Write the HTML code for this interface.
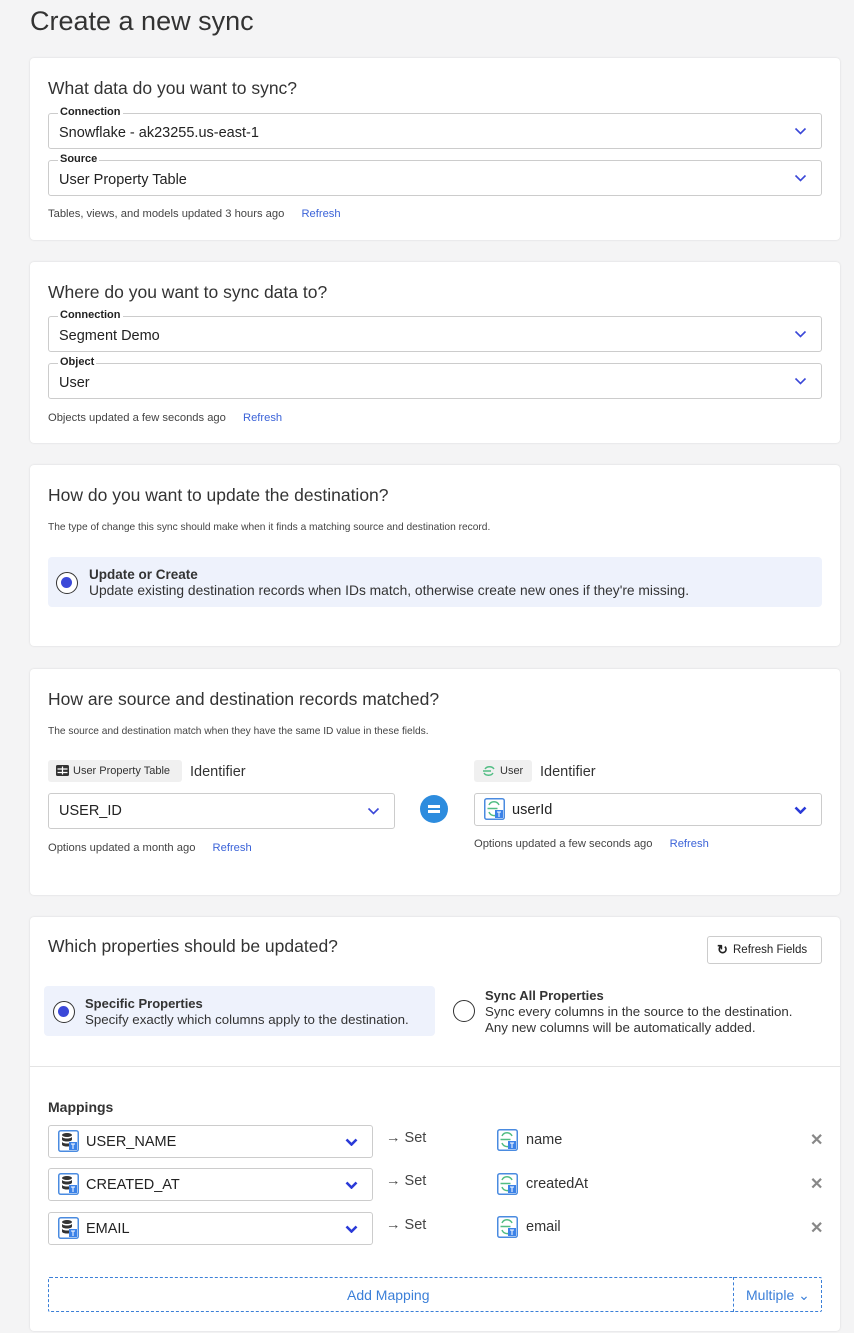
<!DOCTYPE html>
<html><head><meta charset="utf-8"><style>
*{box-sizing:border-box;margin:0;padding:0}
body{width:854px;height:1333px;background:#f4f4f5;font-family:"Liberation Sans",sans-serif;color:#222;position:relative;overflow:hidden}
.a{position:absolute}
h1{position:absolute;left:30px;top:6px;font-size:27px;font-weight:400;color:#333}
.card{position:absolute;left:30px;width:810px;background:#fff;border-radius:4px;box-shadow:0 0 2px rgba(0,0,0,.12)}
.h{position:absolute;left:18px;font-size:17.5px;color:#333}
.sel{position:absolute;border:1px solid #ccc;border-radius:3px;background:#fff;font-size:14.5px;color:#222}
.lbl{position:absolute;left:9px;top:-8px;font-size:11px;font-weight:bold;background:#fff;padding:0 2px;color:#222}
.sel .v{position:absolute;left:10px;top:50%;transform:translateY(-50%)}
.chev{position:absolute;right:14px;top:50%;transform:translateY(-50%)}
.sm{position:absolute;font-size:11.2px;color:#444}
.rf{color:#3b63d8;margin-left:14px}
.radio{position:absolute;width:22px;height:22px;border-radius:50%;border:1.5px solid #333;background:#fff}
.radio.on:after{content:"";position:absolute;left:4px;top:4px;width:11px;height:11px;border-radius:50%;background:#3b48d8}
.ico{position:absolute;width:21px;height:22px}
</style></head><body>
<h1>Create a new sync</h1>
<svg width="0" height="0" style="position:absolute"><defs>
<symbol id="cv" viewBox="0 0 12 8"><path d="M1 1.5l5 5 5-5" fill="none" stroke="#3b48d8" stroke-width="1.6"/></symbol>
<symbol id="cvb" viewBox="0 0 12 8"><path d="M1 1.5l5 5 5-5" fill="none" stroke="#2a3ad8" stroke-width="2.6"/></symbol>
<symbol id="db" viewBox="0 0 21 22"><rect x="0.75" y="0.75" width="19.5" height="20.5" rx="2" fill="#fff" stroke="#4a8be0" stroke-width="1.5"/><ellipse cx="9" cy="5" rx="5" ry="2" fill="#333"/><path d="M4 6.5v3c0 1.2 2.2 2 5 2s5-.8 5-2v-3c0 1.2-2.2 2-5 2s-5-.8-5-2zM4 11.5v3c0 1.2 2.2 2 5 2s5-.8 5-2v-3c0 1.2-2.2 2-5 2s-5-.8-5-2z" fill="#333"/><rect x="11" y="12" width="8" height="8" fill="#3b82e8"/><path d="M13 14h4M15 14v5" stroke="#fff" stroke-width="1"/></symbol>
<symbol id="sg" viewBox="0 0 21 22"><rect x="0.75" y="0.75" width="19.5" height="20.5" rx="2" fill="#fff" stroke="#4a8be0" stroke-width="1.5"/><path d="M5 7a5.5 5.5 0 0 1 10 0M5 14a5.5 5.5 0 0 0 9 2M3.5 10.5h10" fill="none" stroke="#52bd84" stroke-width="1.5"/><rect x="11" y="12" width="8" height="8" fill="#3b82e8"/><path d="M13 14h4M15 14v5" stroke="#fff" stroke-width="1"/></symbol>
</defs></svg>

<div class="card" style="top:58px;height:182px">
<div class="h" style="top:20px">What data do you want to sync?</div>
<div class="sel" style="left:18px;top:55px;width:774px;height:36px"><span class="lbl">Connection</span><span class="v" style="top:55%">Snowflake - ak23255.us-east-1</span><svg class="chev" width="13" height="8"><use href="#cv"/></svg></div>
<div class="sel" style="left:18px;top:102px;width:774px;height:36px"><span class="lbl">Source</span><span class="v" style="top:55%">User Property Table</span><svg class="chev" width="13" height="8"><use href="#cv"/></svg></div>
<div class="sm" style="left:18px;top:150px">Tables, views, and models updated 3 hours ago <span class="rf">Refresh</span></div>
</div>

<div class="card" style="top:262px;height:181px">
<div class="h" style="top:20px">Where do you want to sync data to?</div>
<div class="sel" style="left:18px;top:54px;width:774px;height:36px"><span class="lbl">Connection</span><span class="v" style="top:55%">Segment Demo</span><svg class="chev" width="13" height="8"><use href="#cv"/></svg></div>
<div class="sel" style="left:18px;top:101px;width:774px;height:36px"><span class="lbl">Object</span><span class="v" style="top:55%">User</span><svg class="chev" width="13" height="8"><use href="#cv"/></svg></div>
<div class="sm" style="left:18px;top:150px">Objects updated a few seconds ago <span class="rf">Refresh</span></div>
</div>

<div class="card" style="top:465px;height:181px">
<div class="h" style="top:20px">How do you want to update the destination?</div>
<div class="sm" style="left:18px;top:57px;font-size:10.2px">The type of change this sync should make when it finds a matching source and destination record.</div>
<div class="a" style="left:18px;top:92px;width:774px;height:50px;background:#eef2fc;border-radius:4px"></div>
<div class="radio on" style="left:26px;top:107px"></div>
<div class="a" style="left:59px;top:102px;font-size:13.5px;font-weight:bold;color:#333">Update or Create</div>
<div class="a" style="left:59px;top:118px;font-size:13.8px;color:#333">Update existing destination records when IDs match, otherwise create new ones if they're missing.</div>
</div>

<div class="card" style="top:669px;height:226px">
<div class="h" style="top:20px">How are source and destination records matched?</div>
<div class="sm" style="left:18px;top:57px;font-size:10.2px">The source and destination match when they have the same ID value in these fields.</div>
<div class="a" style="left:18px;top:91px;width:134px;height:22px;background:#f0f0f0;border-radius:3px;font-size:11px;color:#333;padding:5px 0 0 25px">User Property Table</div>
<svg class="a" style="left:26px;top:96px" width="13" height="11"><rect x="0" y="0" width="13" height="11" rx="1.5" fill="#333"/><path d="M1.5 4h10M6.5 1.5v8M1.5 7.5h10" stroke="#fff" stroke-width="1.2"/></svg>
<div class="a" style="left:160px;top:95px;font-size:14.5px;color:#333">Identifier</div>
<div class="sel" style="left:18px;top:124px;width:347px;height:36px"><span class="v">USER_ID</span><svg class="chev" width="13" height="8"><use href="#cv"/></svg></div>
<div class="a" style="left:390px;top:126px;width:28px;height:28px;border-radius:50%;background:#2d8cde"><div class="a" style="left:8px;top:10px;width:12px;height:3px;background:#fff"></div><div class="a" style="left:8px;top:15px;width:12px;height:3px;background:#fff"></div></div>
<div class="sm" style="left:18px;top:173px">Options updated a month ago <span class="rf">Refresh</span></div>
<div class="a" style="left:444px;top:91px;width:58px;height:22px;background:#f0f0f0;border-radius:3px;font-size:11px;color:#333;padding:5px 0 0 26px">User</div>
<svg class="a" style="left:452px;top:96px" width="14" height="12"><path d="M3 4a5 4 0 0 1 9 0M2 8a5 4 0 0 0 9 0M1 6h8" fill="none" stroke="#52bd84" stroke-width="1.4"/></svg>
<div class="a" style="left:510px;top:95px;font-size:14.5px;color:#333">Identifier</div>
<div class="sel" style="left:444px;top:124px;width:348px;height:33px"><span class="v" style="left:37px">userId</span><svg class="chev" width="13" height="8"><use href="#cvb"/></svg></div>
<svg class="ico" style="left:454px;top:129px"><use href="#sg"/></svg>
<div class="sm" style="left:444px;top:169px">Options updated a few seconds ago <span class="rf">Refresh</span></div>
</div>

<div class="card" style="top:917px;height:414px">
<div class="h" style="top:19px">Which properties should be updated?</div>
<div class="a" style="left:677px;top:19px;width:115px;height:28px;border:1px solid #ccc;border-radius:3px;font-size:11.5px;color:#222;padding:7px 0 0 25px">Refresh Fields</div>
<div class="a" style="left:687px;top:25px;font-size:13px;font-weight:bold">&#x21bb;</div>
<div class="a" style="left:14px;top:69px;width:391px;height:50px;background:#eef2fc;border-radius:4px"></div>
<div class="radio on" style="left:23px;top:84px"></div>
<div class="a" style="left:55px;top:79px;font-size:13px;font-weight:bold;color:#333">Specific Properties</div>
<div class="a" style="left:55px;top:95px;font-size:13.3px;color:#333">Specify exactly which columns apply to the destination.</div>
<div class="radio" style="left:423px;top:83px"></div>
<div class="a" style="left:455px;top:71px;font-size:13px;font-weight:bold;color:#333">Sync All Properties</div>
<div class="a" style="left:455px;top:87px;font-size:13.3px;color:#333;line-height:16px">Sync every columns in the source to the destination.<br>Any new columns will be automatically added.</div>
<div class="a" style="left:0;top:149px;width:810px;height:1px;background:#e4e4e4"></div>
<div class="a" style="left:18px;top:182px;font-size:14px;font-weight:bold;color:#333">Mappings</div>

<div class="sel" style="left:18px;top:208px;width:325px;height:33px"><span class="v" style="left:37px">USER_NAME</span><svg class="chev" width="13" height="8"><use href="#cvb"/></svg></div>
<svg class="ico" style="left:28px;top:213px"><use href="#db"/></svg>
<div class="a" style="left:356px;top:213px;font-size:14.5px;color:#444">&#x2192; Set</div>
<svg class="ico" style="left:467px;top:212px"><use href="#sg"/></svg><div class="a" style="left:496px;top:215px;font-size:14.5px;color:#333">name</div>
<div class="a" style="left:780px;top:213px;font-size:16px;color:#888;font-weight:bold">&#x2715;</div>

<div class="sel" style="left:18px;top:251px;width:325px;height:33px"><span class="v" style="left:37px">CREATED_AT</span><svg class="chev" width="13" height="8"><use href="#cvb"/></svg></div>
<svg class="ico" style="left:28px;top:256px"><use href="#db"/></svg>
<div class="a" style="left:356px;top:256px;font-size:14.5px;color:#444">&#x2192; Set</div>
<svg class="ico" style="left:467px;top:256px"><use href="#sg"/></svg><div class="a" style="left:496px;top:259px;font-size:14.5px;color:#333">createdAt</div>
<div class="a" style="left:780px;top:257px;font-size:16px;color:#888;font-weight:bold">&#x2715;</div>

<div class="sel" style="left:18px;top:295px;width:325px;height:33px"><span class="v" style="left:37px">EMAIL</span><svg class="chev" width="13" height="8"><use href="#cvb"/></svg></div>
<svg class="ico" style="left:28px;top:300px"><use href="#db"/></svg>
<div class="a" style="left:356px;top:300px;font-size:14.5px;color:#444">&#x2192; Set</div>
<svg class="ico" style="left:467px;top:299px"><use href="#sg"/></svg><div class="a" style="left:496px;top:302px;font-size:14.5px;color:#333">email</div>
<div class="a" style="left:780px;top:301px;font-size:16px;color:#888;font-weight:bold">&#x2715;</div>

<div class="a" style="left:18px;top:360px;width:774px;height:35px;border:1px dashed #3b7fd8;border-radius:2px"></div>
<div class="a" style="left:703px;top:360px;width:1px;height:35px;border-left:1px dashed #3b7fd8"></div>
<div class="a" style="left:317px;top:370px;font-size:14px;color:#3b7fd8">Add Mapping</div>
<div class="a" style="left:716px;top:370px;font-size:14px;color:#3b7fd8">Multiple &#x2304;</div>
</div>
</body></html>
